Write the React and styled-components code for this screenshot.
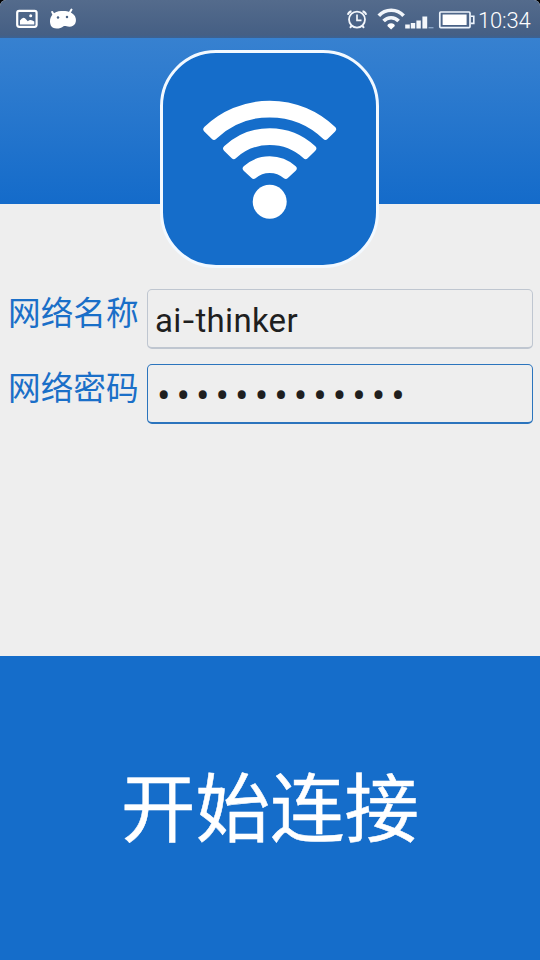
import React from 'react';
import styled, { createGlobalStyle } from 'styled-components';

const GlobalStyle = createGlobalStyle`
  * { box-sizing: border-box; }
  body {
    margin: 0;
    background: #000;
    font-family: Roboto, "Noto Sans CJK SC", sans-serif;
  }
`;

const Screen = styled.div`
  width: 540px;
  height: 960px;
  display: flex;
  flex-direction: column;
  overflow: hidden;
  background: #eeeeee;
  border-radius: 6px 6px 0 0;
`;

const StatusBar = styled.div`
  height: 38px;
  flex: none;
  display: flex;
  justify-content: space-between;
  background: linear-gradient(#546b8c, #455f84 92%, #3b6294);
  color: #ffffff;
`;

const StatusGroup = styled.div`
  display: flex;
  align-items: flex-start;
`;

const Clock = styled.span`
  width: 63px;
  padding-left: 1px;
  font-size: 22px;
  line-height: 42px;
  font-weight: 300;
  letter-spacing: -0.2px;
`;

const Header = styled.header`
  height: 166px;
  flex: none;
  display: flex;
  justify-content: center;
  align-items: flex-start;
  padding: 12px 1px 0 0;
  background: linear-gradient(#3781d0, #146bca);
`;

const Logo = styled.div`
  flex: none;
  width: 219px;
  height: 218px;
  border: 3px solid #f3f9ff;
  border-radius: 56px;
  background: #156dca;
`;

const Form = styled.main`
  height: 452px;
  flex: none;
  display: flex;
  flex-direction: column;
  gap: 15px;
  padding: 85px 7px 0 8px;
`;

const Field = styled.label`
  display: flex;
  justify-content: space-between;
  height: 60px;
`;

const Label = styled.span`
  font-size: 32.7px;
  line-height: 51px;
  color: #1a6fc8;
  white-space: nowrap;
`;

const Box = styled.span`
  width: 386px;
  height: 60px;
  padding-left: ${(p) => (p.$masked ? '9px' : '7px')};
  border: solid ${(p) => (p.$focused ? '#2b74bd' : '#bfc6d0')};
  border-width: 1px 1px 2px 1px;
  border-radius: 5px;
  color: #1f1f1f;
  font-size: ${(p) => (p.$masked ? '40px' : '33px')};
  line-height: ${(p) => (p.$masked ? '63px' : '61px')};
  letter-spacing: ${(p) => (p.$masked ? '6.03px' : '0.3px')};
  white-space: nowrap;
`;

const Hyphen = styled.span`
  display: inline-block;
  margin: 0 2.5px 0 2px;
  transform: scaleX(1.25);
`;

const ConnectButton = styled.button`
  flex: 1;
  display: flex;
  justify-content: center;
  align-items: center;
  border: 0;
  padding: 6px 0 0;
  background: #156dca;
  color: #fff;
  font-family: Roboto, "Noto Sans CJK SC", sans-serif;
  font-size: 74.5px;
  line-height: 100px;
  -webkit-text-stroke: 0.5px #fff;
`;

function fan(cx, cy, inner, outer, corner, half) {
  const at = (r, side) => {
    const a = half - Math.asin(corner / r);
    return `${(cx + side * r * Math.sin(a)).toFixed(2)} ${(cy - r * Math.cos(a)).toFixed(2)}`;
  };
  const ro = outer - corner;
  const ri = inner + corner;
  return `M${at(ro, -1)}A${ro} ${ro} 0 0 1 ${at(ro, 1)}L${at(ri, 1)}A${ri} ${ri} 0 0 0 ${at(ri, -1)}Z`;
}

const WifiLogo = () => (
  <svg width="213" height="212" viewBox="0 0 213 212" fill="#fff" stroke="#fff" strokeWidth="6" strokeLinejoin="round">
    {[[77.6, 94.3, 0.8], [50, 66.7, 0.8], [22, 38.7, 0.82]].map(([inner, outer, half]) => (
      <path key={outer} d={fan(106.7, 142, inner, outer, 3, half)} />
    ))}
    <circle cx="106.7" cy="148.7" r="17" stroke="none" />
  </svg>
);

const Notifications = () => (
  <svg width="90" height="38" viewBox="0 0 90 38">
    <rect x="17.2" y="10.8" width="19.4" height="16" rx="2" fill="none" stroke="#fff" strokeWidth="2.2" />
    <path d="M20 24.5V20.5Q23.5 15.5 26.2 19.5L27.8 21.2Q30.5 18.5 34.3 21.6V24.5Z" fill="#fff" />
    <circle cx="30.7" cy="15.7" r="1.5" fill="#fff" />
    <path d="M54 15.5L52.2 12M69.2 13.5L71.5 9.5" stroke="#fff" strokeWidth="2" strokeLinecap="round" />
    <path d="M50 22C49.8 16 54 11.3 61 11C67 10.5 72.5 11.8 75 16.3C77.5 21.5 75 26.7 69.5 26.8C66.5 26.7 65.5 25.6 63.5 26.2C61 28.5 56 29.2 53 27.8C51 26.8 50.2 24.3 50 22Z" fill="#fff" />
    <circle cx="58" cy="17.5" r="1.25" fill="#4c6486" />
    <circle cx="67" cy="17" r="1.25" fill="#4c6486" />
  </svg>
);

const SystemIcons = () => (
  <svg width="137" height="38" viewBox="340 0 137 38">
    <g fill="none" stroke="#f2f6fb">
      <circle cx="357" cy="19.6" r="8" strokeWidth="1.8" />
      <path d="M357 14.5V20.3H361.5" strokeWidth="1.7" />
      <path d="M347.8 14.8A5 5 0 0 1 351.5 11.2M362.5 11.2A5 5 0 0 1 366.2 14.8M351.6 25.8L350 27.8M362.4 25.8L364 27.8" strokeWidth="2" />
      <path d="M378.8 15.8A16.5 16.5 0 0 1 403.6 15.8" strokeWidth="3.6" />
      <path d="M383.6 21A10.3 10.3 0 0 1 398.6 21" strokeWidth="3.6" />
    </g>
    <path d="M391.1 29.4L387.4 26Q387.6 23.2 391.1 23.2Q394.6 23.2 394.8 26Z" fill="#fff" />
    <path d="M405.2 24.6h4.6v3.8h-4.6zM410.8 23h4.4v5.4h-4.4zM416.4 20.4h4.4v8h-4.4zM422.4 16.6h4.8v11.8h-4.8z" fill="#f4f7fb" />
    <path d="M428.5 27h5v1.4h-5z" fill="#8aa5c6" />
    <rect x="439.8" y="12" width="30.2" height="15.6" rx="1" fill="none" stroke="#edf4fc" strokeWidth="1.7" />
    <rect x="442.6" y="14.5" width="24" height="10.5" fill="#fff" />
    <path d="M470.8 16.2H473.8V23.4H470.8" fill="none" stroke="#edf4fc" strokeWidth="1.6" />
  </svg>
);

export default function App() {
  return (
    <>
      <GlobalStyle />
      <Screen>
        <StatusBar>
          <StatusGroup><Notifications /></StatusGroup>
          <StatusGroup>
            <SystemIcons />
            <Clock>10:34</Clock>
          </StatusGroup>
        </StatusBar>
        <Header>
          <Logo><WifiLogo /></Logo>
        </Header>
        <Form>
          <Field>
            <Label>网络名称</Label>
            <Box>ai<Hyphen>-</Hyphen>thinker</Box>
          </Field>
          <Field>
            <Label>网络密码</Label>
            <Box $focused $masked>•••••••••••••</Box>
          </Field>
        </Form>
        <ConnectButton>开始连接</ConnectButton>
      </Screen>
    </>
  );
}
